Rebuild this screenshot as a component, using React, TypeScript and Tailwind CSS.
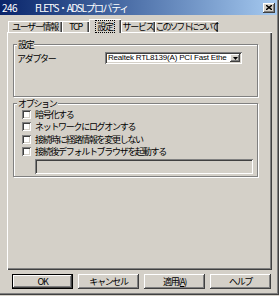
const raised =
  "bg-[#d4d0c8] shadow-[inset_-1px_-1px_#404040,inset_1px_1px_#ffffff,inset_-2px_-2px_#808080]";
const sunken =
  "shadow-[inset_1px_1px_#808080,inset_-1px_-1px_#ffffff,inset_2px_2px_#404040,inset_-2px_-2px_#d4d0c8]";
const etched = "border border-[#808080] shadow-[inset_1px_1px_#ffffff,1px_1px_#ffffff]";

const tabs = [
  { label: "ユーザー情報", w: "w-[54px]" },
  { label: "TCP", w: "w-[27px]" },
  { label: "設定", w: "w-[32px]", active: true },
  { label: "サービス", w: "w-[34px]" },
  { label: "このソフトについて", w: "w-[63px] tracking-[-2.1px]" },
];

const options = [
  "暗号化する",
  "ネットワークにログオンする",
  "接続時に経路情報を変更しない",
  "接続後デフォルトブラウザを起動する",
];

function Button({ children, primary }: { children: React.ReactNode; primary?: boolean }) {
  return (
    <div
      className={
        primary
          ? "w-[61px] h-[15px] flex items-center justify-center border border-black bg-[#d4d0c8] shadow-[inset_-1px_-1px_#404040,inset_1px_1px_#ffffff,inset_-2px_-2px_#808080]"
          : `w-[61px] h-[15px] flex items-center justify-center ${raised}`
      }
    >
      {children}
    </div>
  );
}

export default function App() {
  return (
    <div className="w-[279px] h-[296px] bg-[#d4d0c8] overflow-hidden text-black text-[9px] leading-none tracking-[-1.3px] font-['Noto_Sans_CJK_JP','Noto_Sans',sans-serif]">
      <div className="h-[295px] w-[279px] flex flex-col shadow-[inset_-1px_-1px_#404040,inset_-2px_-2px_#808080]">
        {/* title bar */}
        <div className="h-[15px] w-[277px] flex items-center bg-linear-to-r from-[#0a246a] to-[#a6caf0] text-white pl-[2px] pr-[2px]">
          <span className="w-[33px] text-[10px] tracking-[-0.5px]">246</span>
          <span className="text-[10px] tracking-[-1.4px]">FLET'S・ADSLプロパティ</span>
          <div className={`ml-auto w-[12px] h-[10px] flex items-center justify-center ${raised}`}>
            <svg width="6" height="5" viewBox="0 0 6 5">
              <path d="M0 0L6 5M6 0L0 5" stroke="#000" strokeWidth="1.4" />
            </svg>
          </div>
        </div>

        {/* tabs */}
        <div className="relative z-10 mt-[4px] h-[13px] flex items-end pl-[8px]">
          {tabs.map((t) =>
            t.active ? (
              <div
                key={t.label}
                className={`${t.w} h-[14px] -mb-px flex items-center justify-center whitespace-nowrap bg-[#d4d0c8] shadow-[inset_1px_1px_#ffffff,inset_-1px_0_#404040,inset_-2px_0_#808080]`}
              >
                <span className="border border-dotted border-black px-[1px] py-[1px]">{t.label}</span>
              </div>
            ) : (
              <div
                key={t.label}
                className={`${t.w} h-[11px] flex items-center justify-center whitespace-nowrap bg-[#d4d0c8] shadow-[inset_1px_1px_#ffffff,inset_-1px_0_#404040,inset_-2px_0_#808080]`}
              >
                {t.label}
              </div>
            )
          )}
        </div>

        {/* panel */}
        <div className="ml-[7px] w-[265px] h-[238px] pt-[12px] pl-[6px] flex flex-col shadow-[inset_1px_1px_#ffffff,inset_-1px_-1px_#404040,inset_-2px_-2px_#808080]">
          <div className={`relative w-[245px] h-[53px] ${etched}`}>
            <span className="absolute -top-[5px] left-[3px] bg-[#d4d0c8] px-[1px]">設定</span>
            <div className="mt-[7px] h-[12px] flex items-center pl-[3px]">
              <span>アダプター</span>
              <div className={`ml-auto mr-[15px] w-[137px] h-[12px] bg-white flex items-center pl-[3px] pr-[2px] ${sunken}`}>
                <span className="flex-1 whitespace-nowrap font-['Liberation_Sans',sans-serif] text-[8px] tracking-[-0.2px]">
                  Realtek RTL8139(A) PCI Fast Ethe
                </span>
                <div className={`w-[10px] h-[8px] flex items-center justify-center ${raised}`}>
                  <svg width="5" height="3" viewBox="0 0 5 3">
                    <path d="M0 0H5L2.5 3Z" fill="#000" />
                  </svg>
                </div>
              </div>
            </div>
          </div>

          <div className={`relative mt-[6px] w-[245px] h-[74px] pt-[4px] ${etched}`}>
            <span className="absolute -top-[5px] left-[3px] bg-[#d4d0c8] px-[1px]">オプション</span>
            {options.map((o) => (
              <div key={o} className="h-[12.5px] flex items-center pl-[8px]">
                <div className={`w-[9px] h-[9px] bg-white ${sunken}`} />
                <span className="ml-[4px] whitespace-nowrap">{o}</span>
              </div>
            ))}
            <div className={`mt-[1px] ml-[21px] w-[218px] h-[15px] bg-[#d4d0c8] ${sunken}`} />
          </div>
        </div>

        {/* buttons */}
        <div className="mt-[4px] ml-[12px] flex gap-[5px]">
          <Button primary>OK</Button>
          <Button>キャンセル</Button>
          <Button>
            適用(<span className="underline">A</span>)
          </Button>
          <Button>ヘルプ</Button>
        </div>
      </div>
    </div>
  );
}
